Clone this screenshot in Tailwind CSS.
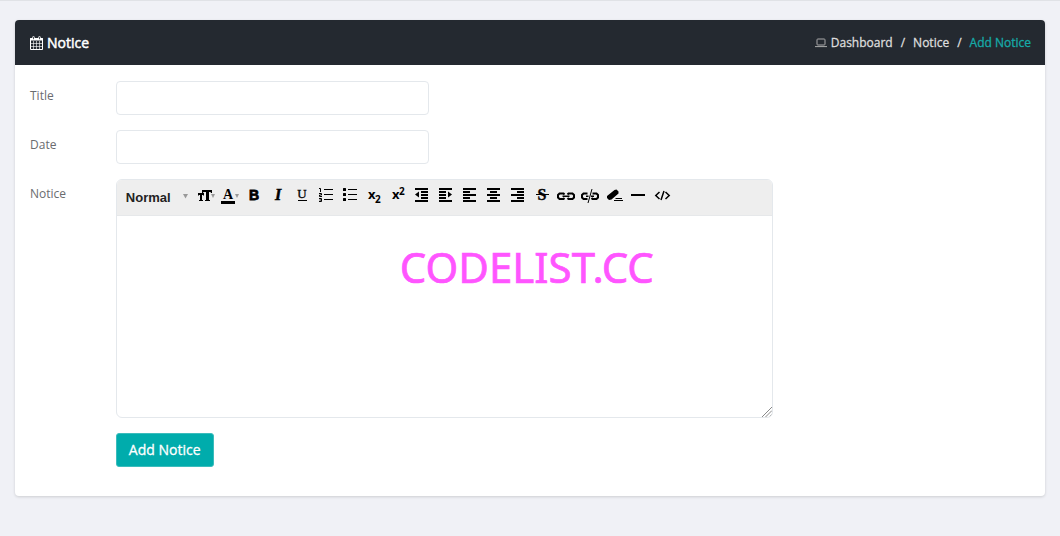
<!DOCTYPE html>
<html lang="en">
<head>
<meta charset="utf-8">
<meta name="viewport" content="width=device-width, initial-scale=1">
<title>Add Notice</title>
<script src="https://cdn.jsdelivr.net/npm/@tailwindcss/browser@4"></script>
</head>
<body class="min-h-screen border-t border-[#e0e2e6] bg-[#f0f1f6] px-[15px] pt-[19px] pb-10 font-['Open_Sans',sans-serif] text-xs text-[#6a6c6f]">
<main class="rounded bg-white pb-[29px] shadow-[0_1px_3px_rgba(0,0,0,0.15)]">
  <header class="flex h-[45px] items-center justify-between rounded-t bg-[#242930] pr-[14px] pl-[15px]">
    <h1 class="flex items-center gap-1 text-sm font-medium text-white [-webkit-text-stroke:0.5px]">
      <svg class="h-[14px] w-[13px]" viewBox="0 0 13 14" fill="none" stroke="#fff" aria-hidden="true"><path d="M.5 2.500h12v11H.5z"/><path fill="#fff" d="M.5 2.500h12v1.500H.5z"/><path stroke-width=".6" d="M3.500 5v8M6.500 5v8M9.500 5v8M1 7.500h11M1 10.500h11"/><path stroke-width="2.4" stroke-linecap="round" d="M3.500 1.400v1.400M9.500 1.400v1.400"/><path stroke="#242930" stroke-width=".8" d="M3.500 1v2.200M9.500 1v2.200"/></svg>
      Notice
    </h1>
    <nav aria-label="Breadcrumb">
      <ol class="flex items-center gap-2 font-medium text-[#dddddd] [-webkit-text-stroke:0.3px]">
        <li><a href="#" class="flex items-center gap-1"><svg class="h-[10px] w-[12px]" viewBox="0 0 12 10" fill="none" stroke="#aaa" aria-hidden="true"><rect x="2" y="1" width="8" height="6" rx=".8"/><path d="M0 8.600h12"/></svg>Dashboard</a></li>
        <li aria-hidden="true">/</li>
        <li><a href="#">Notice</a></li>
        <li aria-hidden="true">/</li>
        <li><a href="#" class="text-[#16aaa8]" aria-current="page">Add Notice</a></li>
      </ol>
    </nav>
  </header>

  <form class="flex flex-col gap-[15px] pt-4">
    <div class="grid grid-cols-12">
      <label for="title" class="pt-[7px] pl-[15px]">Title</label>
      <div class="col-span-4 px-[15px]"><input id="title" type="text" class="block h-[34px] w-full rounded border border-[#e4e8ec] px-3 outline-none"></div>
    </div>
    <div class="grid grid-cols-12">
      <label for="date" class="pt-[7px] pl-[15px]">Date</label>
      <div class="col-span-4 px-[15px]"><input id="date" type="text" class="block h-[34px] w-full rounded border border-[#e4e8ec] px-3 outline-none"></div>
    </div>
    <div class="grid grid-cols-12">
      <label for="notice" class="pt-[7px] pl-[15px]">Notice</label>
      <div class="col-span-8 px-[15px]">
        <div class="relative overflow-hidden rounded-md border border-[#e4e8ec]">
          <div role="toolbar" aria-label="Formatting" class="flex h-9 items-start border-b border-[#e6e8ea] bg-[#eeeeee] pt-[3px] pl-[9px] text-black">
            <div class="relative mt-[3px] w-[68px]">
              <select aria-label="Text style" class="h-6 w-full appearance-none bg-transparent font-['Liberation_Sans',sans-serif] text-[13px] font-bold text-[#222] outline-none"><option>Normal</option><option>Heading</option></select>
              <svg class="pointer-events-none absolute top-[8px] right-[6px] h-[5px] w-[5px]" viewBox="0 0 5 5" fill="#999" aria-hidden="true"><path d="M0 0h5L2.500 4.500z"/></svg>
            </div>
            <button type="button" aria-label="Font size"><svg class="size-6" viewBox="0 0 24 24"><path d="M4 10h6v2.500H9V12H8v5h1v1H5v-1h1v-5H5v.5H4zM8 7h10v3h-1l-.5-1H15v8h1v1h-5v-1h1V9H9.500L9 10H8z"/><path fill="#999" d="M17 11h4l-2 4z"/></svg></button>
            <button type="button" aria-label="Text color"><svg class="size-6" viewBox="0 0 24 24"><text x="10" y="16" text-anchor="middle" class="font-['Liberation_Serif',serif] text-[14px] font-bold">A</text><path d="M3 18h14v3H3z"/><path fill="#999" d="M17 11h4l-2 4z"/></svg></button>
            <button type="button" aria-label="Bold"><svg class="size-6" viewBox="0 0 24 24"><text x="12" y="17" text-anchor="middle" stroke="#000" stroke-width=".8" class="font-['Liberation_Sans',sans-serif] text-[14px] font-bold">B</text></svg></button>
            <button type="button" aria-label="Italic"><svg class="size-6" viewBox="0 0 24 24"><text x="12" y="17" text-anchor="middle" stroke="#000" stroke-width=".5" class="font-['Liberation_Serif',serif] text-[16px] font-bold italic">I</text></svg></button>
            <button type="button" aria-label="Underline"><svg class="size-6" viewBox="0 0 24 24"><text x="12" y="15" text-anchor="middle" stroke="#000" stroke-width=".3" class="font-['Liberation_Serif',serif] text-[13px]">U</text><path d="M8 17h9v1H8z"/></svg></button>
            <button type="button" aria-label="Numbered list"><svg class="size-6" viewBox="0 0 24 24"><path d="M10 6h9v1h-9zM10 11h9v1h-9zM10 16h9v1h-9z"/><path fill="none" stroke="#000" d="M5 5.500h1.500v3.500M5 10.500h2.500v1.500h-2v1.500h2.500M5 15.500h2.500v3H5M5.500 17h2"/></svg></button>
            <button type="button" aria-label="Bulleted list"><svg class="size-6" viewBox="0 0 24 24"><path d="M10 6h9v1h-9zM10 11h9v1h-9zM10 16h9v1h-9z"/><rect x="5" y="5" width="3" height="3" rx=".6"/><rect x="5" y="10" width="3" height="3" rx=".6"/><rect x="5" y="15" width="3" height="3" rx=".6"/></svg></button>
            <button type="button" aria-label="Subscript"><svg class="size-6" viewBox="0 0 24 24"><text x="6" y="16" class="font-['Open_Sans',sans-serif] text-[13px] font-bold">x</text><text x="13" y="20" class="font-['Open_Sans',sans-serif] text-[10px] font-bold">2</text></svg></button>
            <button type="button" aria-label="Superscript"><svg class="size-6" viewBox="0 0 24 24"><text x="6" y="16" class="font-['Open_Sans',sans-serif] text-[13px] font-bold">x</text><text x="13" y="12" class="font-['Open_Sans',sans-serif] text-[10px] font-bold">2</text></svg></button>
            <button type="button" aria-label="Outdent"><svg class="size-6" viewBox="0 0 24 24"><path d="M5 5h13v2H5zM11 8h7v2h-7zM11 11h7v2h-7zM11 14h7v2h-7zM5 17h13v2H5zM5 11.500l4-3v6z"/></svg></button>
            <button type="button" aria-label="Indent"><svg class="size-6" viewBox="0 0 24 24"><path d="M5 5h13v2H5zM5 8h7v2H5zM5 11h7v2H5zM5 14h7v2H5zM5 17h13v2H5zM18 11.500l-4-3v6z"/></svg></button>
            <button type="button" aria-label="Align left"><svg class="size-6" viewBox="0 0 24 24"><path d="M5 5h13v2H5zM5 8h7v2H5zM5 11h13v2H5zM5 14h7v2H5zM5 17h13v2H5z"/></svg></button>
            <button type="button" aria-label="Align center"><svg class="size-6" viewBox="0 0 24 24"><path d="M5 5h13v2H5zM8 8h7v2H8zM5 11h13v2H5zM8 14h7v2H8zM5 17h13v2H5z"/></svg></button>
            <button type="button" aria-label="Align right"><svg class="size-6" viewBox="0 0 24 24"><path d="M5 5h13v2H5zM11 8h7v2h-7zM5 11h13v2H5zM11 14h7v2h-7zM5 17h13v2H5z"/></svg></button>
            <button type="button" aria-label="Strikethrough"><svg class="size-6" viewBox="0 0 24 24"><text x="12" y="17" text-anchor="middle" stroke="#000" stroke-width=".4" class="font-['Liberation_Serif',serif] text-[16px] font-bold">S</text><path d="M6 11h13v1H6z"/></svg></button>
            <button type="button" aria-label="Insert link"><svg class="size-6" viewBox="0 0 24 24"><path fill="none" stroke="#000" stroke-width="2" d="M10.500 11.500l-1-1H5.500L4 12v2.500l1.500 1.500h4l1-1M13.500 11.500l1-1h4L20 12v2.500L18.500 16h-4l-1-1"/><path d="M8.500 12.500h7V14h-7z"/></svg></button>
            <button type="button" aria-label="Remove link"><svg class="size-6" viewBox="0 0 24 24"><path fill="none" stroke="#000" stroke-width="2" d="M9.500 10.500h-4L4 12v2.500l1.500 1.500h4M14.500 10.500h4L20 12v2.500L18.500 16h-4l-1-1"/><path d="M8 12.500h2.500V14H8zM13 12.500h3V14h-3z"/><path stroke="#000" d="M14 6l-4 14"/></svg></button>
            <button type="button" aria-label="Clear formatting"><svg class="size-6" viewBox="0 0 24 24"><path d="M12.500 7l2-.5 2 2v2L9.500 16.500 7 17l-2-2v-2zM14 15h6v1h-7zM12 17h9v1h-9z"/></svg></button>
            <button type="button" aria-label="Horizontal rule"><svg class="size-6" viewBox="0 0 24 24"><path d="M5 11h14v2H5z"/></svg></button>
            <button type="button" aria-label="View source"><svg class="size-6" viewBox="0 0 24 24"><path fill="none" stroke="#000" stroke-width="1.500" d="M9.500 9L5.800 12.500 9.500 16M15.500 9l3.700 3.500-3.700 3.500M14 8l-3 9"/></svg></button>
          </div>
          <textarea id="notice" class="block h-[201px] w-full resize-none p-3 outline-none"></textarea>
          <svg class="absolute right-0 bottom-0 h-[10px] w-[10px]" viewBox="0 0 10 10" stroke="#888" fill="none" aria-hidden="true"><path d="M0 10L10 0M3.500 10L10 3.500M7 10l3-3"/></svg>
          <p class="pointer-events-none absolute top-[57px] left-[283px] font-['Noto_Sans',sans-serif] text-[42px] leading-[60px] text-[#ff55ff] [-webkit-text-stroke:0.7px]">CODELIST.CC</p>
        </div>
      </div>
    </div>
    <div class="grid grid-cols-12">
      <div class="col-span-11 col-start-2 px-[15px]"><button type="submit" class="h-[34px] rounded-[3px] border border-[#3bbcbc] bg-[#00acac] px-3 text-sm font-medium text-white [-webkit-text-stroke:0.3px]">Add Notice</button></div>
    </div>
  </form>
</main>
</body>
</html>
